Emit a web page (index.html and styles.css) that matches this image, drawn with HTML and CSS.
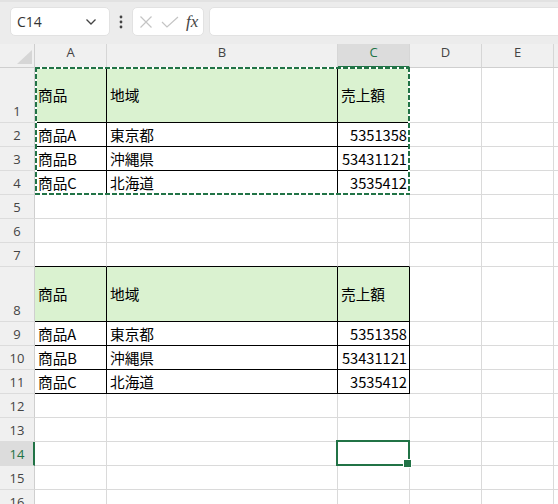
FILE: index.html
```html
<!DOCTYPE html>
<html lang="ja">
<head>
<meta charset="utf-8">
<link rel="stylesheet" href="styles.css">
</head>
<body>
<div class="toolbar">
  <div class="namebox">
    <span class="name">C14</span>
    <svg class="chev" width="12" height="8" viewBox="0 0 12 8"><polyline points="1.5,1.5 6,6 10.5,1.5" fill="none" stroke="#444" stroke-width="1.3"/></svg>
  </div>
  <div class="more">
    <svg width="4" height="14" viewBox="0 0 4 14"><circle cx="2" cy="2" r="1.4" fill="#444"/><circle cx="2" cy="7" r="1.4" fill="#444"/><circle cx="2" cy="12" r="1.4" fill="#444"/></svg>
  </div>
  <div class="fbtns">
    <svg width="14" height="14" viewBox="0 0 14 14"><path d="M1.5 1.5 L12.5 12.5 M12.5 1.5 L1.5 12.5" stroke="#c4c4c4" stroke-width="1.2" fill="none"/></svg>
    <svg width="18" height="12" viewBox="0 0 18 12"><path d="M1 6 L6 11 L17 1" stroke="#c4c4c4" stroke-width="1.2" fill="none"/></svg>
    <span class="fx">fx</span>
  </div>
  <div class="formula"></div>
</div>

<div class="sheet">
  <!-- header row -->
  <div class="corner"><svg width="34" height="23" viewBox="0 0 34 23"><polygon points="32,6 32,20 17,20" fill="#d6d6d6"/></svg></div>
  <div class="ch">A</div>
  <div class="ch">B</div>
  <div class="ch sel">C</div>
  <div class="ch">D</div>
  <div class="ch">E</div>
  <div class="ch last"></div>

  <!-- row 1 -->
  <div class="rh">1</div>
  <div class="c t hd anchor">商品<div class="ants"></div></div>
  <div class="c t hd">地域</div>
  <div class="c t hd">売上額</div>
  <div class="c"></div><div class="c"></div><div class="c last"></div>

  <div class="rh">2</div>
  <div class="c t">商品A</div>
  <div class="c t">東京都</div>
  <div class="c t num">5351358</div>
  <div class="c"></div><div class="c"></div><div class="c last"></div>

  <div class="rh">3</div>
  <div class="c t">商品B</div>
  <div class="c t">沖縄県</div>
  <div class="c t num">53431121</div>
  <div class="c"></div><div class="c"></div><div class="c last"></div>

  <div class="rh">4</div>
  <div class="c t">商品C</div>
  <div class="c t">北海道</div>
  <div class="c t num">3535412</div>
  <div class="c"></div><div class="c"></div><div class="c last"></div>

  <div class="rh">5</div>
  <div class="c"></div><div class="c"></div><div class="c"></div><div class="c"></div><div class="c"></div><div class="c last"></div>

  <div class="rh">6</div>
  <div class="c"></div><div class="c"></div><div class="c"></div><div class="c"></div><div class="c"></div><div class="c last"></div>

  <div class="rh">7</div>
  <div class="c bb"></div><div class="c bb"></div><div class="c bb"></div><div class="c"></div><div class="c"></div><div class="c last"></div>

  <div class="rh">8</div>
  <div class="c t hd">商品</div>
  <div class="c t hd">地域</div>
  <div class="c t hd">売上額</div>
  <div class="c"></div><div class="c"></div><div class="c last"></div>

  <div class="rh">9</div>
  <div class="c t">商品A</div>
  <div class="c t">東京都</div>
  <div class="c t num">5351358</div>
  <div class="c"></div><div class="c"></div><div class="c last"></div>

  <div class="rh">10</div>
  <div class="c t">商品B</div>
  <div class="c t">沖縄県</div>
  <div class="c t num">53431121</div>
  <div class="c"></div><div class="c"></div><div class="c last"></div>

  <div class="rh">11</div>
  <div class="c t">商品C</div>
  <div class="c t">北海道</div>
  <div class="c t num">3535412</div>
  <div class="c"></div><div class="c"></div><div class="c last"></div>

  <div class="rh">12</div>
  <div class="c"></div><div class="c"></div><div class="c"></div><div class="c"></div><div class="c"></div><div class="c last"></div>

  <div class="rh">13</div>
  <div class="c"></div><div class="c"></div><div class="c"></div><div class="c"></div><div class="c"></div><div class="c last"></div>

  <div class="rh sel">14</div>
  <div class="c"></div><div class="c"></div><div class="c cur"></div><div class="c"></div><div class="c"></div><div class="c last"></div>

  <div class="rh">15</div>
  <div class="c"></div><div class="c"></div><div class="c"></div><div class="c"></div><div class="c"></div><div class="c last"></div>

  <div class="rh">16</div>
  <div class="c"></div><div class="c"></div><div class="c"></div><div class="c"></div><div class="c"></div><div class="c last"></div>
</div>
</body>
</html>
```

FILE: styles.css
```css
* { box-sizing: border-box; }
html, body { margin: 0; padding: 0; }
body {
  width: 558px;
  height: 504px;
  overflow: hidden;
  background: #ffffff;
  font-family: "Noto Sans CJK JP", "Noto Sans", sans-serif;
}

.toolbar {
  height: 44px;
  background: #ececec;
  border-top: 2px solid #e2e2e2;
  display: flex;
  align-items: flex-start;
  padding: 5px 0 0 10px;
}
.namebox {
  width: 100px;
  height: 29px;
  background: #fff;
  border: 1px solid #e2e2e2;
  border-radius: 5px;
  display: flex;
  align-items: center;
  justify-content: space-between;
  padding: 0 12px 0 6px;
}
.name {
  font-family: "Open Sans", "Noto Sans", sans-serif;
  font-size: 14px;
  color: #333;
}
.chev { display: block; margin-top: 1px; }
.more {
  width: 22px;
  height: 29px;
  display: flex;
  align-items: center;
  justify-content: center;
}
.more svg { display: block; }
.fbtns {
  width: 72px;
  height: 29px;
  background: #fff;
  border: 1px solid #e2e2e2;
  border-radius: 5px;
  display: flex;
  align-items: center;
  padding: 0 0 0 6px;
  gap: 8px;
}
.fbtns svg { display: block; }
.fx {
  font-family: "Liberation Serif", "DejaVu Serif", serif;
  font-style: italic;
  font-size: 17px;
  color: #444;
  margin-left: -1px;
  line-height: 1;
}
.formula {
  flex: 1;
  height: 29px;
  margin-left: 5px;
  margin-right: -6px;
  background: #fff;
  border: 1px solid #e2e2e2;
  border-radius: 5px;
}

.sheet {
  display: grid;
  grid-template-columns: 35px 72px 231px 72px 72px 72px 1fr;
  grid-template-rows: 24px 55px 24px 24px 24px 24px 24px 24px 55px 24px 24px 24px 24px 24px 24px 24px 24px;
}

.corner {
  background: #f0f0f0;
  border-right: 1px solid #cfcfcf;
  border-bottom: 1px solid #cfcfcf;
}
.corner svg { display: block; }

.ch {
  background: #f0f0f0;
  border-right: 1px solid #d6d6d6;
  border-bottom: 1px solid #cfcfcf;
  font-family: "Open Sans", "Noto Sans", sans-serif;
  font-size: 13px;
  line-height: 17px;
  color: #444;
  text-align: center;
}
.ch.last { border-right: none; }
.ch.sel {
  background: #dcdcdc;
  color: #217346;
  border-bottom: 2px solid #217346;
}

.rh {
  background: #f0f0f0;
  border-right: 1px solid #cfcfcf;
  border-bottom: 1px solid #dcdcdc;
  font-family: "Open Sans", "Noto Sans", sans-serif;
  font-size: 13px;
  line-height: 18px;
  color: #444;
  display: flex;
  align-items: flex-end;
  justify-content: center;
  padding-bottom: 2px;
}
.rh.sel {
  background: #dcdcdc;
  color: #217346;
  border-right: 2px solid #217346;
  padding-left: 1px;
}

.c {
  border-right: 1px solid #dadada;
  border-bottom: 1px solid #dadada;
  font-size: 14.67px;
  line-height: 20px;
  color: #000;
  display: flex;
  align-items: center;
  padding: 0 2px 0 3px;
  white-space: nowrap;
}
.c.last { border-right: none; }
.c.t {
  border-right-color: #000;
  border-bottom-color: #000;
}
.c.bb { border-bottom-color: #000; }
.c.hd { background: #daf2d0; }
.c.num { justify-content: flex-end; padding-right: 2px; }

.c.cur { position: relative; }
.c.cur::before {
  content: "";
  position: absolute;
  top: -2px;
  left: -2px;
  right: -1px;
  bottom: -1px;
  border: 2px solid #217346;
}
.c.cur::after {
  content: "";
  position: absolute;
  right: -3px;
  bottom: -3px;
  width: 7px;
  height: 7px;
  background: #217346;
  border: 1px solid #fff;
}

.anchor { position: relative; }
.ants {
  position: absolute;
  top: -1px;
  left: 0;
  width: 375px;
  height: 128px;
  pointer-events: none;
  background:
    repeating-linear-gradient(90deg, #217346 0 5px, #fff 5px 7px) top left / 100% 2px no-repeat,
    repeating-linear-gradient(90deg, #217346 0 5px, #fff 5px 7px) bottom left / 100% 2px no-repeat,
    repeating-linear-gradient(180deg, #217346 0 5px, #fff 5px 7px) top left / 2px 100% no-repeat,
    repeating-linear-gradient(180deg, #217346 0 5px, #fff 5px 7px) top right / 2px 100% no-repeat;
}
```
